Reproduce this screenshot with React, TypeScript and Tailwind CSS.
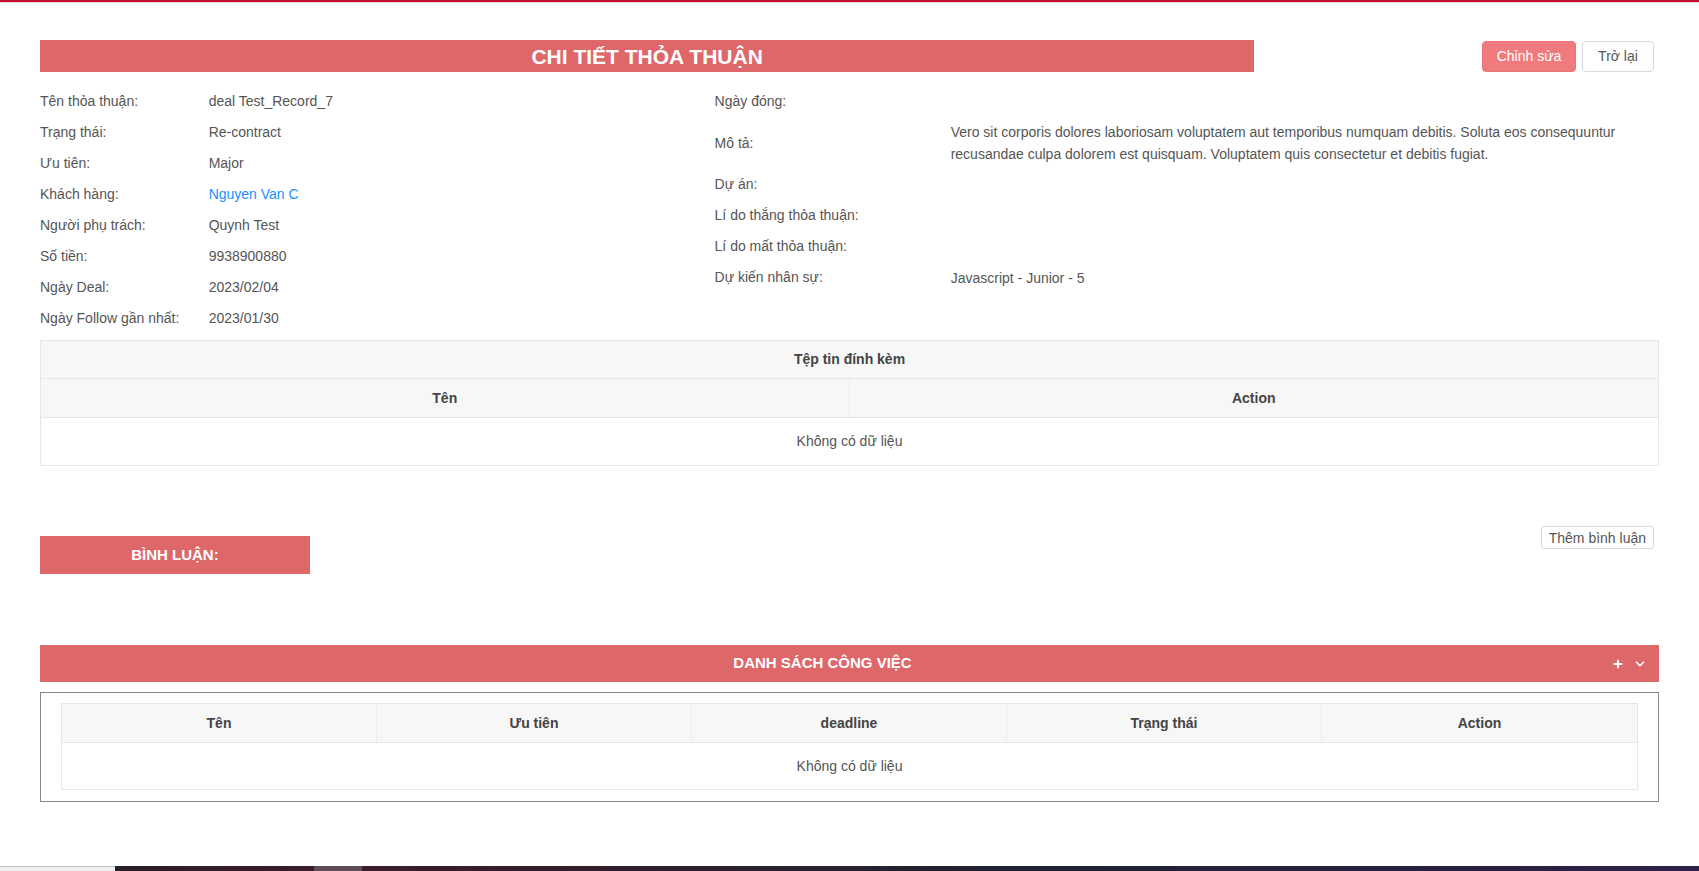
import { Plus, ChevronDown } from 'lucide-react';

const leftRows: { label: string; value: string; link?: boolean }[] = [
  { label: 'Tên thỏa thuận:', value: 'deal Test_Record_7' },
  { label: 'Trạng thái:', value: 'Re-contract' },
  { label: 'Ưu tiên:', value: 'Major' },
  { label: 'Khách hàng:', value: 'Nguyen Van C', link: true },
  { label: 'Người phụ trách:', value: 'Quynh Test' },
  { label: 'Số tiền:', value: '9938900880' },
  { label: 'Ngày Deal:', value: '2023/02/04' },
  { label: 'Ngày Follow gần nhất:', value: '2023/01/30' },
];

const DESCRIPTION =
  'Vero sit corporis dolores laboriosam voluptatem aut temporibus numquam debitis. Soluta eos consequuntur recusandae culpa dolorem est quisquam. Voluptatem quis consectetur et debitis fugiat.';

const rightRows: { label: string; value: string; multi?: boolean }[] = [
  { label: 'Ngày đóng:', value: '' },
  { label: 'Mô tả:', value: DESCRIPTION, multi: true },
  { label: 'Dự án:', value: '' },
  { label: 'Lí do thắng thỏa thuận:', value: '' },
  { label: 'Lí do mất thỏa thuận:', value: '' },
  { label: 'Dự kiến nhân sự:', value: 'Javascript - Junior - 5' },
];

const taskColumns = ['Tên', 'Ưu tiên', 'deadline', 'Trạng thái', 'Action'];

export default function App() {
  return (
    <div className="h-[871px] flex flex-col bg-white text-[14px] text-[#555] font-['Liberation_Sans',Arial,sans-serif] overflow-hidden">
      {/* top accent line */}
      <div className="h-[3px] bg-[#c50d2f] border-b border-[#e9d6da] shrink-0" />

      <div className="px-[40px] pt-[37px]">
        {/* Header */}
        <div className="flex items-start">
          <div className="w-3/4 h-[32px] bg-[#de676a] flex items-center justify-center">
            <h1 className="text-white font-bold text-[21px] leading-none">CHI TIẾT THỎA THUẬN</h1>
          </div>
          <div className="flex-1 flex justify-end gap-[6px] pr-[5px] pt-[1px]">
            <button className="h-[31px] w-[94px] rounded-[4px] bg-[#f07b7e] border border-[#ee7376] text-white">
              Chỉnh sửa
            </button>
            <button className="h-[31px] w-[72px] rounded-[4px] bg-white border border-[#d9d9d9] text-[#555]">
              Trở lại
            </button>
          </div>
        </div>

        {/* Info */}
        <div className="flex mt-[14px]">
          <div className="w-5/12">
            {leftRows.map((row) => (
              <div key={row.label} className="flex items-center h-[31px]">
                <span className="w-1/4">{row.label}</span>
                <span className={row.link ? 'text-[#1890ff]' : ''}>{row.value}</span>
              </div>
            ))}
          </div>
          <div className="flex-1">
            {rightRows.map((row) => (
              <div key={row.label} className={`flex items-center ${row.multi ? 'py-[4px]' : 'h-[31px]'}`}>
                <span className="w-1/4 shrink-0">{row.label}</span>
                <span className="flex-1 leading-[22px]">{row.value}</span>
              </div>
            ))}
          </div>
        </div>

        {/* Attachments */}
        <div className="mt-[6px] border border-[#e6e6e6]">
          <div className="h-[38px] bg-[#f7f7f7] border-b border-[#e6e6e6] flex items-center justify-center font-bold text-[#444]">
            Tệp tin đính kèm
          </div>
          <div className="h-[39px] bg-[#f7f7f7] border-b border-[#e6e6e6] grid grid-cols-2 font-bold text-[#444]">
            <div className="flex items-center justify-center border-r border-[#ececec]">Tên</div>
            <div className="flex items-center justify-center">Action</div>
          </div>
          <div className="h-[47px] flex items-center justify-center">Không có dữ liệu</div>
        </div>

        {/* Comments */}
        <div className="mt-[60px] flex items-start justify-between">
          <div className="w-1/6 h-[38px] mt-[10px] bg-[#de676a] flex items-center justify-center text-white font-bold text-[15px]">
            BÌNH LUẬN:
          </div>
          <button className="h-[23px] px-[7px] mr-[5px] rounded-[3px] border border-[#d9d9d9] bg-white text-[#555] leading-none">
            Thêm bình luận
          </button>
        </div>

        {/* Task list */}
        <div className="mt-[71px] h-[37px] bg-[#de676a] flex items-center text-white">
          <span className="flex-1 text-center font-bold text-[15px]">DANH SÁCH CÔNG VIỆC</span>
          <div className="w-[54px] flex justify-end items-center gap-[9px] pr-[12px]">
            <Plus size={12} strokeWidth={4} />
            <ChevronDown size={14} strokeWidth={3} />
          </div>
        </div>
        <div className="mt-[10px] border border-[#888] px-[20px] pt-[10px] pb-[11px]">
          <div className="border border-[#e6e6e6]">
            <div className="h-[39px] bg-[#f7f7f7] border-b border-[#e6e6e6] grid grid-cols-5 font-bold text-[#444]">
              {taskColumns.map((col, i) => (
                <div
                  key={col}
                  className={`flex items-center justify-center ${i < taskColumns.length - 1 ? 'border-r border-[#ececec]' : ''}`}
                >
                  {col}
                </div>
              ))}
            </div>
            <div className="h-[46px] flex items-center justify-center">Không có dữ liệu</div>
          </div>
        </div>
      </div>

      {/* bottom strip */}
      <div className="mt-auto h-[5px] flex shrink-0">
        <div className="w-[115px] bg-[#f0f0f0] border-t border-[#c2c2c2]" />
        <div className="w-[199px] bg-gradient-to-r from-[#2a1e26] to-[#3a1d2c]" />
        <div className="w-[48px] bg-[#5e4c58]" />
        <div className="flex-1 bg-gradient-to-r from-[#3a1d2c] via-[#1f2231] to-[#2e1f48]" />
      </div>
    </div>
  );
}
